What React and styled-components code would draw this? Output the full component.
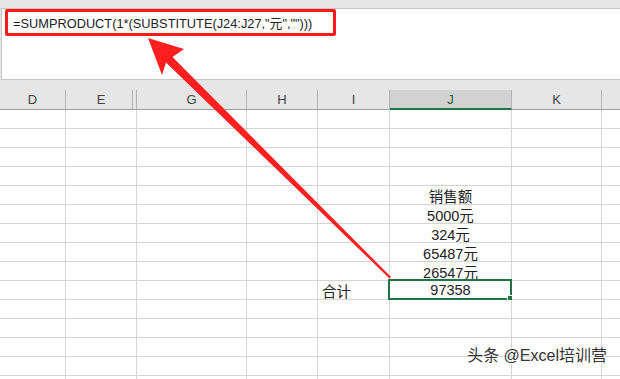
import React from "react";
import styled, { createGlobalStyle } from "styled-components";

const GlobalStyle = createGlobalStyle`
  html, body {
    margin: 0;
    padding: 0;
    background: #e6e6e6;
    overflow: hidden;
  }
  body {
    font-family: "Liberation Sans", "Noto Sans CJK SC", sans-serif;
  }
`;

const columns = [
  { name: "D", width: 66 },
  { name: "E", width: 71, double: true },
  { name: "G", width: 110 },
  { name: "H", width: 71 },
  { name: "I", width: 72 },
  { name: "J", width: 122, active: true },
  { name: "K", width: 90 },
  { name: "", width: 30 },
];

const cells = {
  4: { J: "销售额" },
  5: { J: "5000元" },
  6: { J: "324元" },
  7: { J: "65487元" },
  8: { J: "26547元" },
  9: { I: "合计", J: "97358" },
};

const Page = styled.div`
  position: relative;
  width: 620px;
  height: 379px;
  overflow: hidden;
  background: #e6e6e6;
  padding-top: 8px;
  box-sizing: border-box;
`;

const FormulaBar = styled.div`
  height: 72px;
  margin-left: 1px;
  background: #fff;
  border-top: 1px solid #c6c6c6;
  border-bottom: 1px solid #c6c6c6;
  border-left: 1px solid #c6c6c6;
  box-sizing: border-box;
  padding: 0 0 0 3px;
`;

const FormulaBox = styled.div`
  width: 331px;
  height: 27px;
  border: 3px solid #ff1a1a;
  border-radius: 2px;
  box-sizing: border-box;
  display: flex;
  align-items: center;
  padding-left: 5px;
  font-size: 12.8px;
  color: #222;
  white-space: nowrap;
`;

const Sheet = styled.div`
  display: grid;
  grid-template-columns: ${columns.map((c) => c.width + "px").join(" ")};
  padding-top: 10px;
`;

const HeadCell = styled.div`
  height: 18px;
  display: flex;
  align-items: center;
  justify-content: center;
  font-size: 13px;
  color: ${(p) => (p.$active ? "#1f5c3a" : "#444")};
  background: ${(p) => (p.$active ? "#d2d2d2" : "#e6e6e6")};
  border-right: 1px solid #b4b4b4;
  border-bottom: ${(p) => (p.$active ? "2px solid #217346" : "1px solid #9f9f9f")};
  box-shadow: ${(p) => (p.$double ? "inset -3px 0 0 #e6e6e6, inset -4px 0 0 #b4b4b4" : "none")};
  box-sizing: content-box;
  padding-bottom: ${(p) => (p.$active ? "0" : "1px")};
`;

const Cell = styled.div`
  position: relative;
  height: 18px;
  background: #fff;
  border-right: 1px solid #d4d4d4;
  border-bottom: 1px solid #d4d4d4;
  display: flex;
  align-items: center;
  justify-content: ${(p) => (p.$left ? "flex-start" : "center")};
  padding-left: ${(p) => (p.$left ? "4px" : "0")};
  font-size: 14.5px;
  color: #222;
  white-space: nowrap;
`;

const Selection = styled.div`
  position: absolute;
  left: -2px;
  top: -2px;
  right: -1px;
  bottom: -1px;
  border: 2px solid #217346;
  pointer-events: none;

  &::after {
    content: "";
    position: absolute;
    right: -4px;
    bottom: -4px;
    width: 5px;
    height: 5px;
    background: #217346;
    border: 1px solid #fff;
  }
`;

const Overlay = styled.svg`
  position: absolute;
  left: 0;
  top: 0;
  pointer-events: none;
`;

const Watermark = styled.div`
  position: absolute;
  right: 13px;
  bottom: 13px;
  font-size: 16px;
  color: #333;
  text-shadow: 0 0 2px #fff, 0 0 2px #fff;
  white-space: nowrap;
`;

const App = () => {
  const rows = Array.from({ length: 15 }, (_, i) => i);
  return (
    <Page>
      <GlobalStyle />
      <FormulaBar>
        <FormulaBox>=SUMPRODUCT(1*(SUBSTITUTE(J24:J27,"元","")))</FormulaBox>
      </FormulaBar>
      <Sheet>
        {columns.map((c, i) => (
          <HeadCell key={"h" + i} $active={c.active} $double={c.double}>
            {c.name}
          </HeadCell>
        ))}
        {rows.map((r) =>
          columns.map((c, i) => {
            const value = cells[r] && cells[r][c.name];
            const selected = r === 9 && c.name === "J";
            return (
              <Cell key={r + "-" + i} $left={c.name === "I"}>
                {value}
                {selected && <Selection />}
              </Cell>
            );
          })
        )}
      </Sheet>
      <Overlay width="620" height="379" viewBox="0 0 620 379">
        <polygon
          fill="#ff1f1f"
          points="148,38 184,49 172.5,57 391,277 389.5,278.5 166,62.5 162,75"
        />
      </Overlay>
      <Watermark>头条 @Excel培训营</Watermark>
    </Page>
  );
};

export default App;
